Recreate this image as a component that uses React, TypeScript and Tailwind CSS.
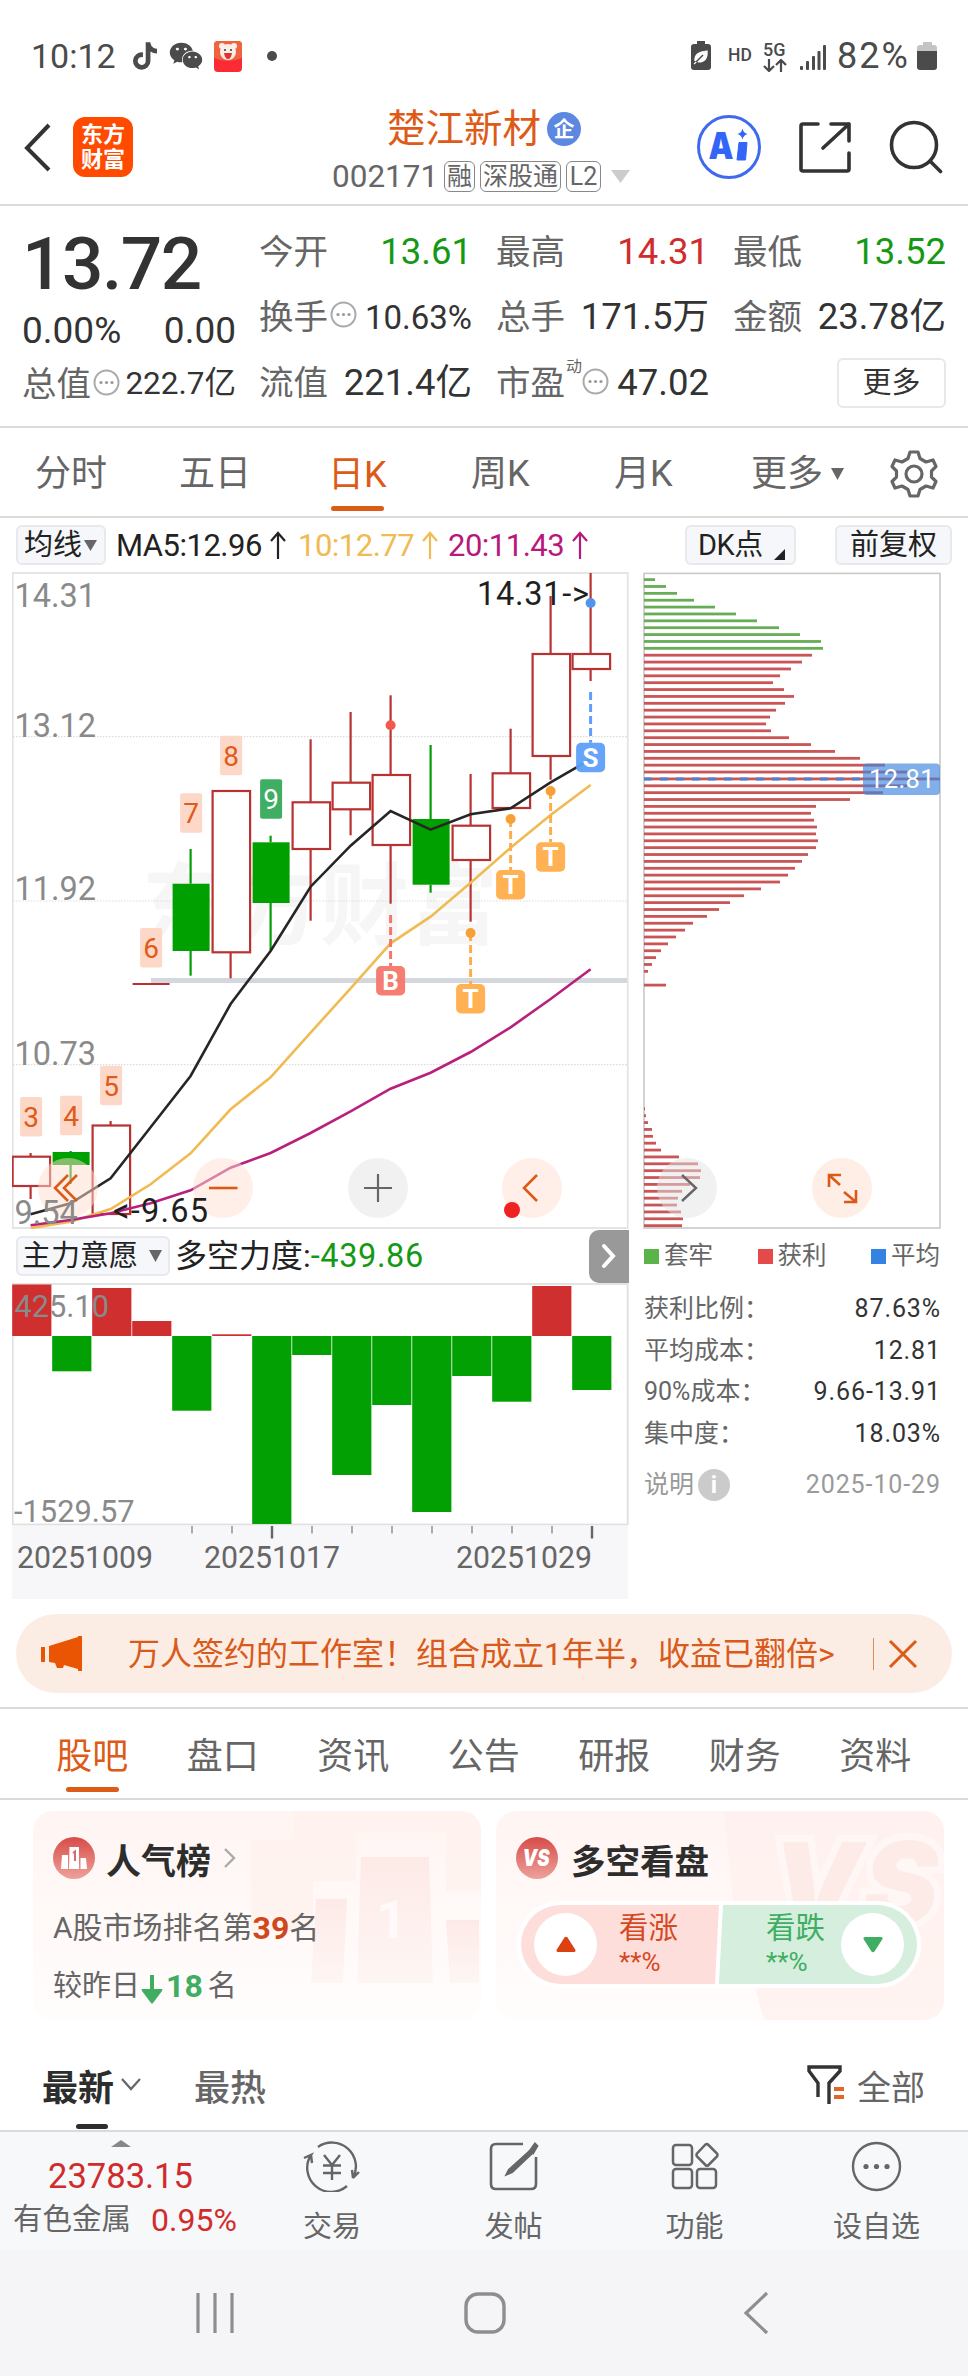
import React from 'react';
import { FaTiktok, FaWeixin } from 'react-icons/fa6';

type Candle = { open: number; close: number; high: number; low: number; up: boolean };

const FIRST_X = 30.6;
const STEP = 40;
const cx = (i: number) => FIRST_X + i * STEP;

const candles: Candle[] = [
  { open: 1156.7, close: 1186, high: 1153, low: 1199, up: true },
  { open: 1152, close: 1165, high: 1151, low: 1184, up: false },
  { open: 1125.5, close: 1214, high: 1121, low: 1214, up: true },
  { open: 984, close: 984, high: 984, low: 984, up: true },
  { open: 883.7, close: 951, high: 849, low: 975.7, up: false },
  { open: 791, close: 952.3, high: 791, low: 978.3, up: true },
  { open: 842.3, close: 903, high: 835.7, low: 950.3, up: false },
  { open: 802.3, close: 849, high: 739.3, low: 920.7, up: true },
  { open: 782.7, close: 809.3, high: 712, low: 835.3, up: true },
  { open: 775, close: 845, high: 695.3, low: 903.7, up: true },
  { open: 819, close: 884.7, high: 745, low: 892.7, up: false },
  { open: 825.7, close: 860, high: 774, low: 921.7, up: true },
  { open: 773.3, close: 808, high: 728.7, low: 808, up: true },
  { open: 654, close: 756, high: 596, low: 779.7, up: true },
  { open: 654, close: 669, high: 573, low: 681, up: true },
];

const averages = [
  { color: '#efbb52', ys: [1228, 1221.7, 1209, 1184.3, 1153.3, 1109.3, 1077.3, 1032.7, 988.3, 943.3, 916.7, 882.7, 847.7, 815, 785] },
  { color: '#b8207c', ys: [1225.3, 1220, 1213.3, 1203.3, 1190.3, 1167.7, 1153, 1133, 1111.3, 1088.7, 1072.7, 1052, 1027.3, 999, 969.3] },
  { color: '#262626', ys: [1214.3, 1203.3, 1178.3, 1127.3, 1076, 1004, 951, 886.7, 845.7, 811, 829.7, 814.3, 808.3, 782.3, 759.3] },
];

const counts = [
  { i: 0, n: '3', y: 1097 },
  { i: 1, n: '4', y: 1095.7 },
  { i: 2, n: '5', y: 1065.7 },
  { i: 3, n: '6', y: 928 },
  { i: 4, n: '7', y: 793.3 },
  { i: 5, n: '8', y: 735.7 },
  { i: 6, n: '9', y: 779.3 },
];

const signals = [
  { i: 9, t: 'B', dot: 725.3, from: 915, y: 966, color: '#f5766a', dotColor: '#f0594b' },
  { i: 11, t: 'T', dot: 933, from: 933, y: 984, color: '#ffad4a', dotColor: '#f6a037' },
  { i: 12, t: 'T', dot: 819, from: 819, y: 870, color: '#ffad4a', dotColor: '#f6a037' },
  { i: 13, t: 'T', dot: 791, from: 791, y: 842.3, color: '#ffad4a', dotColor: '#f6a037' },
  { i: 14, t: 'S', dot: 603, from: 692, y: 742.7, color: '#5e9ffa', dotColor: '#5592e8' },
];

const axis = [
  { v: '14.31', y: 606.5 },
  { v: '13.12', y: 736.5 },
  { v: '11.92', y: 900 },
  { v: '10.73', y: 1064.5 },
  { v: '9.54', y: 1224 },
];

const chips = [
  11, 22, 33, 50, 71, 92, 113, 135, 156, 177, 179, 168, 158, 147, 136, 129, 140, 150, 141, 132, 126, 122, 127, 145, 167,
  191, 216, 241, 263, 296, 263, 239, 206, 172, 167, 170, 173, 172, 174, 172, 164, 158, 151, 144, 136, 117, 100, 86, 75,
  63, 49, 41, 32, 24, 17, 12, 8, 4, 0, 22, 0, 0, 0, 0, 0, 0, 0, 0, 0, 0, 0, 0, 0, 0, 0, 0, 0, 1, 2, 4, 8, 9, 12, 17, 35,
  54, 57, 56, 46, 38, 34, 33, 37, 39, 38,
];

const power = [1284.5, 1371.3, 1288, 1321, 1410.7, 1334.3, 1524, 1355, 1475, 1405, 1512, 1376, 1401.7, 1286, 1390];

const KLineChart = () => (
  <svg width="617" height="657" viewBox="12 572 617 657" className="block" fontFamily="Roboto, 'Noto Sans CJK SC', sans-serif">
    <text x="142" y="937" fontSize="89" fontWeight="700" fill="#f6f6f6">东方财富</text>
    <rect x="12.7" y="573" width="615" height="655" fill="none" stroke="#e3e3e3" strokeWidth="1.8" />
    {[736.7, 901, 1064.7].map((y) => (
      <line key={y} x1="13" x2="628" y1={y} y2={y} stroke="#dcdcdc" strokeWidth="1.2" strokeDasharray="1.5 1.5" />
    ))}
    <rect x="151" y="978" width="476" height="5" fill="#d4d7dd" />
    {candles.map((c, i) => {
      const color = c.up ? '#b83232' : '#049c04';
      return (
        <g key={i} stroke={color} strokeWidth="2.2">
          <line x1={cx(i)} x2={cx(i)} y1={c.high} y2={c.open} />
          <line x1={cx(i)} x2={cx(i)} y1={c.close} y2={c.low} />
          {c.open === c.close ? (
            <line x1={cx(i) - 18} x2={cx(i) + 19} y1={c.open} y2={c.open} />
          ) : c.up ? (
            <rect x={cx(i) - 18} y={c.open} width="37.5" height={c.close - c.open} fill="#fff" />
          ) : (
            <rect x={cx(i) - 18} y={c.open} width="37" height={c.close - c.open} fill="#00a000" stroke="none" />
          )}
        </g>
      );
    })}
    {averages.map((a) => (
      <polyline key={a.color} points={a.ys.map((y, i) => `${cx(i)},${y}`).join(' ')} fill="none" stroke={a.color} strokeWidth="2.6" />
    ))}
    {counts.map((c) => (
      <g key={c.n}>
        <rect x={cx(c.i) - 10.5} y={c.y} width="22" height="39.5" rx="2" fill={c.n === '9' ? '#3fae63' : '#fdd8c8'} />
        <text x={cx(c.i) + 0.5} y={c.y + 30} fontSize="28" textAnchor="middle" fill={c.n === '9' ? '#fff' : '#e05a1a'}>{c.n}</text>
      </g>
    ))}
    {signals.map((s) => (
      <g key={s.i}>
        <line x1={cx(s.i)} x2={cx(s.i)} y1={s.from} y2={s.y} stroke={s.color} strokeWidth="3" strokeDasharray="8 4" />
        <circle cx={cx(s.i)} cy={s.dot} r="5" fill={s.dotColor} />
        <rect x={cx(s.i) - 14.5} y={s.y} width="29" height="29.5" rx="5" fill={s.color} fillOpacity="0.95" />
        <text x={cx(s.i)} y={s.y + 24} fontSize="26" fontWeight="700" textAnchor="middle" fill="#fff">{s.t}</text>
      </g>
    ))}

    <g fillOpacity="0.5">
      <circle cx="68" cy="1188" r="30" fill="#ffddcd" />
      <circle cx="223" cy="1188" r="30" fill="#ffe0d2" />
      <circle cx="378" cy="1188" r="30" fill="#e4e4e4" />
      <circle cx="532" cy="1188" r="30" fill="#ffe0d2" />
    </g>
    <g fill="none" stroke="#dc5a18" strokeWidth="2.6">
      <path d="M68 1175 L55 1188 L68 1201 M77 1175 L64 1188 L77 1201" />
      <path d="M209 1188 H237.5" />
      <path d="M537 1175 L524 1188 L537 1201" />
      <path d="M378 1174 V1202 M364 1188 H392" stroke="#666" strokeWidth="2.2" />
    </g>
    <circle cx="512" cy="1210" r="8" fill="#ee2222" />

    {axis.map((a) => (
      <text key={a.v} x="14.5" y={a.y} fontSize="32.5" fill="#8a8a8a">{a.v}</text>
    ))}
    <text x="477" y="605" fontSize="32.5" fill="#1f1f1f" textLength="112">14.31-&gt;</text>
    <text x="113" y="1221.5" fontSize="32.5" fill="#1f1f1f" textLength="95">&lt;-9.65</text>
  </svg>
);

const ChipChart = () => (
  <svg width="299" height="657" viewBox="643 572 299 657" className="block" fontFamily="Roboto, sans-serif">
    <rect x="644" y="573.4" width="296" height="654.6" fill="none" stroke="#c9c9c9" strokeWidth="1.6" />
    {chips.map((w, i) => (
      <rect key={i} x="644" y={578.2 + i * 6.873} width={w} height="2.8" fill={i < 11 ? '#66ad56' : '#c95556'} />
    ))}
    <line x1="644" x2="864" y1="779" y2="779" stroke="#4a82cc" strokeWidth="3" strokeDasharray="7.5 8.5" />
    <rect x="863" y="763.5" width="77" height="31.5" rx="4" fill="#3f86de" fillOpacity="0.66" />
    <text x="902" y="788" fontSize="25.5" letterSpacing="0.4" textAnchor="middle" fill="#fff">12.81</text>
    <circle cx="687" cy="1188" r="30" fill="#e4e4e4" fillOpacity="0.5" />
    <path d="M682 1175 L696 1188 L682 1201" fill="none" stroke="#666" strokeWidth="2.4" />
    <circle cx="842" cy="1188" r="30" fill="#ffeee6" />
    <path d="M829 1187 V1175 H841 M829 1175 L840 1185 M844 1192 L856 1202 M856 1190 V1202 H844" fill="none" stroke="#dc5a18" strokeWidth="2.6" />
  </svg>
);

const PowerChart = () => (
  <svg width="617" height="317" viewBox="12 1283 617 317" className="block" fontFamily="Roboto, sans-serif">
    <rect x="12" y="1526" width="616" height="73" fill="#f7f7fa" />
    <rect x="12.7" y="1284" width="615" height="240.5" fill="none" stroke="#e0e0e0" strokeWidth="1.8" />
    {power.map((y, i) => (
      <rect
        key={i}
        x={12.2 + i * STEP}
        y={Math.min(y, 1336)}
        width="39.2"
        height={Math.abs(1336 - y)}
        fill={y < 1336 ? '#d02f2f' : '#02a002'}
      />
    ))}
    {Array.from({ length: 11 }, (_, i) => {
      const major = i === 2 || i === 10;
      return <line key={i} x1={192 + i * 40} x2={192 + i * 40} y1="1526" y2={major ? 1538.5 : 1533.5} stroke={major ? '#666' : '#999'} strokeWidth={major ? 2.4 : 1.6} />;
    })}
    <g fontSize="32" fill="#8a8a8a">
      <text x="14.5" y="1317" textLength="94.500" lengthAdjust="spacingAndGlyphs">425.10</text>
      <text x="14" y="1521.5" textLength="120.500" lengthAdjust="spacingAndGlyphs">-1529.57</text>
    </g>
    <g fontSize="32" fill="#666">
      <text x="17" y="1567.5" textLength="136" lengthAdjust="spacingAndGlyphs">20251009</text>
      <text x="204" y="1567.5" textLength="136" lengthAdjust="spacingAndGlyphs">20251017</text>
      <text x="456" y="1567.5" textLength="136" lengthAdjust="spacingAndGlyphs">20251029</text>
    </g>
  </svg>
);

const StatusBar = () => (
  <div className="flex h-[84px] items-center pt-7 pl-[31px] pr-[30px] text-[#4b4b4b]">
    <span className="w-[102px] text-[34px]">10:12</span>
    <FaTiktok className="h-[28px] w-[24px]" />
    <FaWeixin className="ml-[12px] h-[34px] w-[34px]" />
    <svg width="28" height="31" viewBox="0 0 28 31" className="ml-[11px]">
      <rect width="28" height="31" rx="4" fill="#fb2b35" />
      <path d="M0 4 Q0 0 4 0 H24 Q28 0 28 4 V17 Q14 23 0 17 Z" fill="#ee6440" />
      <circle cx="14" cy="11" r="8" fill="#fbeee6" />
      <circle cx="8" cy="5" r="3" fill="#fbeee6" />
      <circle cx="20" cy="5" r="3" fill="#fbeee6" />
      <circle cx="11" cy="9" r="1" fill="#333" />
      <circle cx="17" cy="9" r="1" fill="#333" />
      <path d="M10 12 H18 Q17 18 14 18 Q11 18 10 12" fill="#d33" />
    </svg>
    <span className="ml-[25px] h-2.5 w-2.5 rounded-full bg-[#4b4b4b]" />
    <div className="ml-auto flex items-center">
      <svg width="20" height="30" viewBox="0 0 20 30">
        <path d="M6 0 H14 V3 H17 Q20 3 20 6 V26 Q20 29 17 29 H3 Q0 29 0 26 V6 Q0 3 3 3 H6 Z" fill="#4b4b4b" />
        <path d="M4 20 Q3 11 16 10 Q17 21 7 21 M3 23 L12 15" fill="#fff" stroke="#fff" strokeWidth="1.2" />
        <path d="M5 21 L12 14" stroke="#4b4b4b" strokeWidth="1.4" />
      </svg>
      <span className="ml-[17px] w-[35px] text-[17.500px] font-medium">HD</span>
      <div className="flex w-[37px] flex-col">
        <span className="text-[18px] font-medium">5G</span>
        <svg width="24" height="13" viewBox="0 0 24 13" fill="none" stroke="#4b4b4b" strokeWidth="2.2">
          <path d="M6 0 V11 M1 7 L6 12 L11 7 M18 13 V2 M13 6 L18 1 L23 6" />
        </svg>
      </div>
      <svg width="27" height="26" viewBox="0 0 27 26" fill="#4b4b4b" className="mt-1">
        <rect x="0" y="21" width="3" height="4" rx="1" />
        <rect x="6" y="16" width="3" height="9" rx="1" />
        <rect x="12" y="11" width="3" height="14" rx="1" />
        <rect x="17.500" y="6" width="3" height="19" rx="1" />
        <rect x="23" y="0" width="3" height="25" rx="1" />
      </svg>
      <span className="ml-[10px] w-[80px] text-[36px] tracking-[2px]">82%</span>
      <svg width="21" height="29" viewBox="0 0 21 29">
        <path d="M6 0 H15 V3 H17 Q20 3 20 6 V9 H0 V6 Q0 3 3 3 H6 Z" fill="#c4c4c4" />
        <path d="M0 9 H20 V25 Q20 28 17 28 H3 Q0 28 0 25 Z" fill="#4b4b4b" />
      </svg>
    </div>
  </div>
);

const Header = () => (
  <header className="flex h-[122px] items-center border-b-2 border-[#dadada] pt-[6px] pl-[23px] pr-[25px]">
    <svg width="29" height="50" viewBox="0 0 29 50" fill="none" stroke="#333" strokeWidth="4">
      <path d="M26 3 L4 26 L26 48" />
    </svg>
    <div className="ml-[21px] flex h-[60px] w-[60px] flex-col items-center justify-center rounded-[12px] bg-[#ff4a00] text-[22px] leading-[25px] font-bold text-white">
      <span>东方</span>
      <span>财富</span>
    </div>
    <div className="ml-[199px] flex w-[299px] flex-col pt-2">
      <div className="flex items-center pl-[55px]">
        <span className="text-[38.500px] text-[#dd5b17]">楚江新材</span>
        <span className="ml-[6px] flex h-[34px] w-[34px] items-center justify-center rounded-full bg-[#5c88e2] text-[21px] font-bold text-white">企</span>
      </div>
      <div className="mt-3 flex items-center text-[#666]">
        <span className="w-[112px] text-[31.500px]">002171</span>
        <div className="flex gap-[5px] text-[25px]">
          <span className="flex h-[31px] w-[31px] items-center justify-center rounded-[6px] border border-[#888]">融</span>
          <span className="flex h-[31px] w-[81px] items-center justify-center rounded-[6px] border border-[#888]">深股通</span>
          <span className="flex h-[31px] w-[35px] items-center justify-center rounded-[6px] border border-[#888]">L2</span>
        </div>
        <svg width="19" height="13" viewBox="0 0 19 13" className="ml-[10px]">
          <path d="M0 0 H19 L9.500 13 Z" fill="#ccc" />
        </svg>
      </div>
    </div>
    <svg width="66" height="66" viewBox="0 0 66 66" className="ml-auto">
      <circle cx="33" cy="33" r="30.5" fill="none" stroke="#3e6bee" strokeWidth="3" />
      <text x="12.500" y="44.500" fontSize="37" fontWeight="900" fontFamily="Inter" fill="#3366f6" textLength="25" lengthAdjust="spacingAndGlyphs">A</text>
      <path d="M43 28.500 H51 L49.500 46 H41 Z" fill="#3366f6" stroke="#3366f6" strokeLinejoin="round" />
      <path d="M46.500 14.500 Q47.500 19 51.500 20 Q47.500 21 46.500 25.500 Q45.500 21 41.500 20 Q45.500 19 46.500 14.500" fill="#3366f6" />
    </svg>
    <svg width="52" height="52" viewBox="0 0 52 52" fill="none" stroke="#333" strokeWidth="3.6" className="ml-[37px]" strokeLinejoin="round" strokeLinecap="round">
      <path d="M19 3 H4 Q2 3 2 5 V48 Q2 50 4 50 H48 Q50 50 50 48 V32" />
      <path d="M32 3 H50 V20 M50 3 L24 27" />
    </svg>
    <svg width="54" height="54" viewBox="0 0 54 54" fill="none" stroke="#333" strokeWidth="3.6" className="ml-[38px]" strokeLinecap="round">
      <circle cx="25" cy="25" r="22.5" />
      <path d="M41 41 L51.500 51.500" />
    </svg>
  </header>
);

const Dots = ({ className }: { className?: string }) => (
  <svg width="27" height="27" viewBox="0 0 27 27" className={className}>
    <circle cx="13.5" cy="13.5" r="12" fill="none" stroke="#aaa" strokeWidth="2" />
    <circle cx="8" cy="13.5" r="1.6" fill="#999" />
    <circle cx="13.500" cy="13.5" r="1.6" fill="#999" />
    <circle cx="19" cy="13.5" r="1.6" fill="#999" />
  </svg>
);

const Quote = () => (
  <section className="flex h-[222px] border-b-2 border-[#dadada] pl-[22px] pr-[22px] text-[#333]">
    <div className="flex w-[214px] flex-col pt-[20px]">
      <span className="flex h-[76px] items-center text-[73px] font-medium tracking-[-1.5px]">13.72</span>
      <div className="mt-[10px] flex h-[36px] items-center justify-between text-[37px]">
        <span>0.00%</span>
        <span>0.00</span>
      </div>
      <div className="mt-[18px] flex h-[36px] items-center whitespace-nowrap">
        <span className="text-[34.500px] text-[#666]">总值</span>
        <Dots className="mb-1 ml-[2px]" />
        <span className="ml-auto text-[31.500px]">222.7亿</span>
      </div>
    </div>
    <div className="ml-[23px] grid h-[210px] grow grid-cols-3 grid-rows-3 gap-x-[24px] pt-[13px] text-[36.500px]">
      <div className="flex items-center justify-between">
        <span className="text-[34.500px] text-[#666]">今开</span>
        <span className="text-[#159915]">13.61</span>
      </div>
      <div className="flex items-center justify-between">
        <span className="text-[34.500px] text-[#666]">最高</span>
        <span className="text-[#d02c2c]">14.31</span>
      </div>
      <div className="flex items-center justify-between">
        <span className="text-[34.500px] text-[#666]">最低</span>
        <span className="text-[#159915]">13.52</span>
      </div>
      <div className="flex items-center">
        <span className="text-[34.500px] text-[#666]">换手</span>
        <Dots className="mb-1.5 ml-[2px]" />
        <span className="ml-auto text-[33px]">10.63%</span>
      </div>
      <div className="flex items-center justify-between">
        <span className="text-[34.500px] text-[#666]">总手</span>
        <span>171.5万</span>
      </div>
      <div className="flex items-center justify-between">
        <span className="text-[34.500px] text-[#666]">金额</span>
        <span>23.78亿</span>
      </div>
      <div className="flex items-center justify-between">
        <span className="text-[34.500px] text-[#666]">流值</span>
        <span>221.4亿</span>
      </div>
      <div className="flex items-center">
        <span className="text-[34.500px] text-[#666]">市盈</span>
        <span className="mb-8 ml-[1px] text-[16px] text-[#666]">动</span>
        <Dots className="mb-1" />
        <span className="ml-auto">47.02</span>
      </div>
      <div className="flex items-center justify-end">
        <button className="h-[50px] w-[109px] shrink-0 rounded-md border-2 border-[#e8e8e8] text-[29px]">更多</button>
      </div>
    </div>
  </section>
);

const PeriodTabs = () => (
  <nav className="flex h-[90px] items-center border-b-2 border-[#dadada] pt-[3px] pl-[35px] text-[36px] text-[#666]">
    <span className="w-[144px]">分时</span>
    <span className="w-[149px]">五日</span>
    <div className="flex h-full w-[143px] flex-col text-[#dc5b17]">
      <span className="flex h-[75px] items-center pt-[13px]">日K</span>
      <span className="ml-[3px] h-[5px] w-[53px] rounded-full bg-[#dc5b17]" />
    </div>
    <span className="w-[143px]">周K</span>
    <span className="w-[137px]">月K</span>
    <span>更多</span>
    <svg width="14" height="12" viewBox="0 0 14 12" className="ml-[8px]">
      <path d="M0 0 H13 L6.500 12 Z" fill="#666" />
    </svg>
    <svg width="48" height="48" viewBox="0 0 48 48" fill="none" stroke="#666" strokeWidth="3.2" strokeLinejoin="round" className="ml-[45px]">
      <path d="M20 2 H28 L30 8.500 L36 12 L43 10 L46 16.500 L41.500 21 V27 L46 31.500 L43 38 L36 36 L30 39.500 L28 46 H20 L18 39.500 L12 36 L5 38 L2 31.500 L6.500 27 V21 L2 16.500 L5 10 L12 12 L18 8.500 Z" />
      <circle cx="24" cy="24" r="8" />
    </svg>
  </nav>
);

const UpArrow = () => (
  <svg width="16" height="28" viewBox="0 0 16 28" fill="none" stroke="currentColor" strokeWidth="2.2" className="ml-[8px]">
    <path d="M8 28 V2 M1 10 L8 2 L15 10" />
  </svg>
);

const ChartToolbar = () => (
  <div className="flex h-[54px] items-center pr-4 pl-4 text-[31px] tracking-[-0.5px] text-[#222]">
    <div className="flex h-[40px] w-[90px] items-center rounded-md border-2 border-[#e8e9ed] bg-[#f6f7fa] pl-[6px] text-[29px] tracking-normal">
      均线
      <svg width="14" height="11" viewBox="0 0 14 11" className="ml-[2px]">
        <path d="M0 0 H13 L6.500 11 Z" fill="#666" />
      </svg>
    </div>
    <span className="ml-[10px] flex w-[182px] items-center">MA5:12.96<UpArrow /></span>
    <span className="flex w-[150px] items-center text-[#efbb52]">10:12.77<UpArrow /></span>
    <span className="flex items-center text-[#b8187c]">20:11.43<UpArrow /></span>
    <div className="ml-auto flex h-[40px] w-[111px] items-center rounded-md border-2 border-[#e8e9ed] bg-[#f6f7fa] pl-[11px] text-[29px]">
      DK点
      <svg width="12" height="12" viewBox="0 0 12 12" className="mt-5 ml-[11px]">
        <path d="M11 0 V11 H0 Z" fill="#222" />
      </svg>
    </div>
    <div className="ml-[39px] flex h-[40px] w-[117px] items-center justify-center rounded-md border-2 border-[#e8e9ed] bg-[#f6f7fa] text-[29px] tracking-normal">前复权</div>
  </div>
);

const stats = [
  { label: '获利比例：', value: '87.63%' },
  { label: '平均成本：', value: '12.81' },
  { label: '90%成本：', value: '9.66-13.91' },
  { label: '集中度：', value: '18.03%' },
];

const Charts = () => (
  <section className="flex h-[1028px] pl-3">
    <div className="w-[617px]">
      <KLineChart />
      <div className="flex h-[54px] items-center pl-1">
        <div className="flex h-[40px] w-[154px] items-center rounded-md border-2 border-[#e8e9ed] bg-[#f6f7fa] pl-[4px] text-[29px] text-[#222]">
          主力意愿
          <svg width="14" height="12" viewBox="0 0 14 12" className="ml-[11px]">
            <path d="M0 0 H13 L6.500 12 Z" fill="#666" />
          </svg>
        </div>
        <span className="ml-[5px] text-[32px] text-[#222]">多空力度:</span>
        <span className="text-[32.500px] tracking-[0.6px] text-[#159915]">-439.86</span>
        <div className="ml-auto flex h-[53px] w-[40px] items-center justify-center rounded-l-[10px] bg-[#999]">
          <svg width="16" height="26" viewBox="0 0 16 26" fill="none" stroke="#fff" strokeWidth="4" strokeLinecap="round">
            <path d="M3 3 L12 13 L3 23" />
          </svg>
        </div>
      </div>
      <PowerChart />
    </div>
    <div className="ml-[14px] w-[298px]">
      <ChipChart />
      <div className="flex h-[54px] items-center justify-between pr-[1px] pl-[1px] text-[24.5px] text-[#666]">
        <span className="flex items-center gap-[5px]"><i className="h-[15px] w-[15px] bg-[#5ab44a]" />套牢</span>
        <span className="flex items-center gap-[5px]"><i className="h-[15px] w-[15px] bg-[#e54a4a]" />获利</span>
        <span className="flex items-center gap-[5px]"><i className="h-[15px] w-[15px] bg-[#3482e2]" />平均</span>
      </div>
      <div className="flex flex-col pt-[5px] pl-[1px] text-[25px]">
        {stats.map((s) => (
          <div key={s.label} className="flex h-[41.5px] items-center justify-between">
            <span className="text-[#666]">{s.label}</span>
            <span className="tracking-[0.9px] text-[#333]">{s.value}</span>
          </div>
        ))}
        <div className="mt-[10px] flex h-[41px] items-center text-[#9a9a9a]">
          <span>说明</span>
          <span className="ml-[4px] flex h-[32px] w-[32px] items-center justify-center rounded-full bg-[#cbcbcb] text-[24px] font-bold text-white">i</span>
          <span className="ml-auto tracking-[0.9px]">2025-10-29</span>
        </div>
      </div>
    </div>
  </section>
);

const Banner = () => (
  <div className="h-[109px] border-b-2 border-[#dadada] px-4 pt-[14px]">
    <div className="flex h-[79px] items-center rounded-full bg-[#fcede4] pl-[25px] text-[#d95a1a]">
      <svg width="41" height="36" viewBox="0 0 41 36" fill="#ea5504">
        <rect x="0" y="11" width="4" height="15" />
        <path d="M8 10 L37 1 V0 H41 V35 H37 V33 L23 29 L22 32 H16 L14 27 L8 26 Z" />
      </svg>
      <span className="ml-[46px] text-[32px] whitespace-nowrap">万人签约的工作室！组合成立1年半，收益已翻倍&gt;</span>
      <span className="ml-[38px] h-[32px] w-[1.5px] bg-[#e08a5c]" />
      <svg width="30" height="30" viewBox="0 0 30 30" fill="none" stroke="#dd5b17" strokeWidth="3" className="ml-[14px]">
        <path d="M2 2 L28 28 M28 2 L2 28" />
      </svg>
    </div>
  </div>
);

const sections = ['股吧', '盘口', '资讯', '公告', '研报', '财务', '资料'];

const SectionTabs = () => (
  <nav className="flex h-[91px] border-b-2 border-[#dadada] pl-[27px] text-[36px] text-[#666]">
    {sections.map((s, i) => (
      <div key={s} className={i === 0 ? 'flex w-[130.500px] flex-col items-center text-[#dc5b17]' : 'flex w-[130.500px] flex-col items-center'}>
        <span className="flex h-[78px] items-center pt-[17px]">{s}</span>
        {i === 0 && <span className="h-[5px] w-[53px] rounded-full bg-[#dc5b17]" />}
      </div>
    ))}
  </nav>
);

const RankCard = () => (
  <div className="relative h-[209px] w-[448px] overflow-hidden rounded-[20px] bg-linear-to-b from-[#fff5f3] to-[#fffdfc] pl-[20px]">
    <svg width="230" height="209" viewBox="0 0 230 209" className="absolute top-0 right-0">
      <defs>
        <linearGradient id="podium" x1="0" y1="0" x2="0" y2="1">
          <stop offset="0" stopColor="#fdeae7" />
          <stop offset="1" stopColor="#fef6f4" />
        </linearGradient>
      </defs>
      <path d="M42 0 H230 V80 H195 V20 H105 V70 H62 V120 H0 V28 H42 Z" fill="#fff1ee" fillOpacity="0.8" />
      <path d="M110 46 H178 L182 172 H106 Z" fill="url(#podium)" />
      <path d="M65 88 H96 L92 172 H60 Z" fill="url(#podium)" />
      <path d="M195 109 H228 V172 H199 Z" fill="url(#podium)" />
      <text x="125" y="127" fontSize="54" fontWeight="700" fontFamily="Roboto" fill="#fffaf9">1</text>
    </svg>
    <div className="relative flex h-[94px] items-center">
      <svg width="42" height="42" viewBox="0 0 42 42">
        <defs>
          <linearGradient id="ball" x1="0" y1="0" x2="0" y2="1">
            <stop offset="0" stopColor="#d74c48" />
            <stop offset="1" stopColor="#eda29c" />
          </linearGradient>
        </defs>
        <circle cx="21" cy="21" r="21" fill="url(#ball)" />
        <path d="M9 18 H15 V32 H8 Z M16.500 10 H26 V32 H16 Z M27.500 21 H33 L34 32 H27.500 Z" fill="#fff" />
        <path d="M20 16 L22 14.500 V24" fill="none" stroke="#d96a64" strokeWidth="2" />
      </svg>
      <span className="ml-[11px] pt-2 text-[35px] font-bold text-[#2d2d2d]">人气榜</span>
      <svg width="13" height="22" viewBox="0 0 13 22" fill="none" stroke="#aaa" strokeWidth="2.4" className="ml-[13px]">
        <path d="M1 2 L10 11 L1 20" />
      </svg>
    </div>
    <div className="relative flex h-[46px] items-center text-[30px] text-[#666]">
      A股市场排名第<b className="text-[32px] text-[#cf481c]">39</b>名
    </div>
    <div className="relative mt-[12px] flex h-[46px] items-center text-[29px] text-[#666]">
      较昨日
      <svg width="22" height="30" viewBox="0 0 22 30" className="mt-2 ml-[1px]">
        <path d="M9 0 H13 V14 H21 Q22 15 21 16 L12 28 Q11 29 10 28 L1 16 Q0 15 1 14 H9 Z" fill="#3fae63" />
      </svg>
      <b className="ml-[3px] text-[32px] text-[#3fae63]">18</b>
      <span className="ml-[5px]">名</span>
    </div>
  </div>
);

const VoteCard = () => (
  <div className="relative h-[209px] w-[448px] overflow-hidden rounded-[20px] bg-linear-to-b from-[#fff5f3] to-[#fffdfc] pl-[20px]">
    <svg width="220" height="209" viewBox="0 0 220 209" className="absolute top-0 right-0">
      <path d="M0 0 H220 V209 H40 L10 100 Z" fill="#fff0ed" fillOpacity="0.7" />
      <text x="48" y="112" fontSize="112" fontWeight="900" fontStyle="italic" fontFamily="Inter" fill="#fdebe8" stroke="#fff7f5" strokeWidth="14" paintOrder="stroke" textLength="166">VS</text>
    </svg>
    <div className="relative flex h-[90px] items-center">
      <svg width="42" height="42" viewBox="0 0 42 42" className="mt-1">
        <circle cx="21" cy="21" r="21" fill="url(#ball)" />
        <text x="20" y="29" fontSize="23" fontWeight="900" fontStyle="italic" fontFamily="Inter" fill="#fff" textAnchor="middle" textLength="27" lengthAdjust="spacingAndGlyphs">VS</text>
      </svg>
      <span className="ml-[13px] pt-3 text-[34.500px] font-bold text-[#2d2d2d]">多空看盘</span>
    </div>
    <div className="relative ml-[1px] flex h-[87px] w-[404px] overflow-hidden rounded-full border-4 border-white bg-white text-[26px]">
      <svg width="396" height="79" viewBox="0 0 396 79" className="absolute top-0 left-0">
        <path d="M0 0 H198 L194 79 H0 Z" fill="#fddedb" />
        <path d="M202 0 H396 V79 H198 Z" fill="#d6eedd" />
      </svg>
      <div className="relative flex w-1/2 items-center pl-[13px] text-[#d4491f]">
        <span className="flex h-[63px] w-[63px] items-center justify-center rounded-full bg-white">
          <svg width="22" height="17" viewBox="0 0 22 17"><path d="M9.500 1.500 Q11 0 12.500 1.500 L20.500 14 Q21 16 19 16 H3 Q1 16 1.500 14 Z" fill="#dd4112" /></svg>
        </span>
        <span className="ml-[22px] flex flex-col gap-[6px]">
          <span className="text-[29.500px]">看涨</span>
          <span>**%</span>
        </span>
      </div>
      <div className="relative flex w-1/2 items-center justify-end pr-[13px] text-[#3fae63]">
        <span className="mr-[16px] flex flex-col gap-[6px]">
          <span className="text-[29.500px]">看跌</span>
          <span>**%</span>
        </span>
        <span className="flex h-[63px] w-[63px] items-center justify-center rounded-full bg-white">
          <svg width="22" height="17" viewBox="0 0 22 17"><path d="M9.500 15.500 Q11 17 12.500 15.500 L20.500 3 Q21 1 19 1 H3 Q1 1 1.500 3 Z" fill="#3fae63" /></svg>
        </span>
      </div>
    </div>
  </div>
);

const FeedTabs = () => (
  <div className="flex h-[112px] border-b-2 border-[#dadada] pl-[42px] pr-[43px] text-[36px]">
    <div className="flex w-[152px] flex-col">
      <div className="flex h-[104px] items-center pt-[33px] font-bold text-[#2d2d2d]">
        最新
        <svg width="20" height="13" viewBox="0 0 20 13" fill="none" stroke="#666" strokeWidth="2.2" className="-mt-2 ml-[7px]">
          <path d="M1 1 L10 11 L19 1" />
        </svg>
      </div>
      <span className="ml-[34px] h-[5px] w-[32px] shrink-0 rounded-full bg-[#2d2d2d]" />
    </div>
    <span className="flex h-[104px] items-center pt-[33px] font-medium text-[#666]">最热</span>
    <div className="ml-auto flex h-[104px] items-center pt-[31px] text-[34px] text-[#666]">
      <svg width="38" height="40" viewBox="0 0 38 40" fill="none" stroke="#333" strokeWidth="3.4" className="-mt-2 mr-[12px]">
        <path d="M11 33 V19 L2 7 V3 H33 V7 L22 19 V40" />
        <path d="M27 25 H37 M27 33 H37" stroke="#e0662a" strokeWidth="4" />
      </svg>
      全部
    </div>
  </div>
);

const BottomBar = () => (
  <div className="flex h-[118px] bg-[#f7f8fa] text-[#666]">
    <div className="flex w-[241px] flex-col items-center">
      <svg width="20" height="7" viewBox="0 0 20 7" className="mt-[8px]"><path d="M10 0 L20 7 H0 Z" fill="#888" /></svg>
      <span className="mt-[12px] text-[34.500px]  text-[#d02c2c]">23783.15</span>
      <div className="mt-[10px] flex w-full items-center pl-[13px] text-[29.500px]">
        有色金属
        <span className="ml-[20px] text-[32px] text-[#d02c2c]">0.95%</span>
      </div>
    </div>
    <div className="flex w-[182px] flex-col items-center pt-[9px] text-[29px]">
      <svg width="58" height="51" viewBox="0 0 58 51" fill="none" stroke="#666" strokeWidth="2.4">
        <path d="M15 6 A24 24 0 0 1 50 37 L56 31 M50 37 L49 29" />
        <path d="M44 45 A24 24 0 0 1 8 14 L1 17 M8 14 L9 22" />
        <path d="M21 14 L29 24 L37 14 M29 24 V39 M20 24.500 H38 M20 32 H38" />
      </svg>
      <span className="mt-[21px]">交易</span>
    </div>
    <div className="flex w-[181px] flex-col items-center pt-[9px] text-[29px]">
      <svg width="50" height="51" viewBox="0 0 50 51" fill="none" stroke="#666" strokeWidth="2.6">
        <path d="M34 3 H7 Q2 3 2 8 V43 Q2 48 7 48 H42 Q47 48 47 43 V16" />
        <path d="M41 10 L46 3 L48 5 L44 12 Z" fill="#666" />
        <path d="M40 11 L20 29 L18 33 L23 31 L42 13 Z" fill="#666" />
      </svg>
      <span className="mt-[21px]">发帖</span>
    </div>
    <div className="flex w-[181px] flex-col items-center pt-[9px] text-[29px]">
      <svg width="48" height="51" viewBox="0 0 48 51" fill="none" stroke="#666" strokeWidth="2.5">
        <rect x="2" y="4" width="19" height="20" rx="3" />
        <rect x="2" y="28" width="19" height="19" rx="3" />
        <rect x="26" y="28" width="19" height="19" rx="3" />
        <path d="M34.500 3.500 Q36 2.500 37.500 4 L46 12.500 Q47 14 46 15.500 L37.500 24 Q36 25.500 34.500 24 L26 15.500 Q25 14 26 12.500 Z" />
      </svg>
      <span className="mt-[21px]">功能</span>
    </div>
    <div className="flex w-[183px] flex-col items-center pt-[9px] text-[29px]">
      <svg width="51" height="51" viewBox="0 0 51 51">
        <circle cx="25.500" cy="25.500" r="23.5" fill="none" stroke="#666" strokeWidth="2.4" />
        <circle cx="15" cy="25.500" r="2.6" fill="#666" />
        <circle cx="25.500" cy="25.500" r="2.6" fill="#666" />
        <circle cx="36" cy="25.500" r="2.6" fill="#666" />
      </svg>
      <span className="mt-[21px]">设自选</span>
    </div>
  </div>
);

const SystemNav = () => (
  <div className="flex h-[126px] items-center bg-[#f5f5f7] pl-[196px]">
    <svg width="38" height="42" viewBox="0 0 38 42" stroke="#8e8e8e" strokeWidth="3.2">
      <path d="M2 1 V41 M19 1 V41 M36 1 V41" />
    </svg>
    <svg width="42" height="42" viewBox="0 0 42 42" fill="none" stroke="#8e8e8e" strokeWidth="3.4" className="ml-[230px]">
      <rect x="2" y="2" width="38" height="38" rx="12" />
    </svg>
    <svg width="26" height="44" viewBox="0 0 26 44" fill="none" stroke="#8e8e8e" strokeWidth="3.2" className="ml-[237px]">
      <path d="M24 2 L3 22 L24 42" />
    </svg>
  </div>
);

const App: React.FC = () => {
  return (
    <div className="w-[968px] bg-white font-[Roboto,'Noto_Sans_CJK_SC',sans-serif] leading-none">
      <StatusBar />
      <Header />
      <Quote />
      <PeriodTabs />
      <ChartToolbar />
      <Charts />
      <Banner />
      <SectionTabs />
      <div className="flex gap-[15px] pt-[11px] pl-[33px]">
        <RankCard />
        <VoteCard />
      </div>
      <FeedTabs />
      <BottomBar />
      <SystemNav />
    </div>
  );
};

export default App;
